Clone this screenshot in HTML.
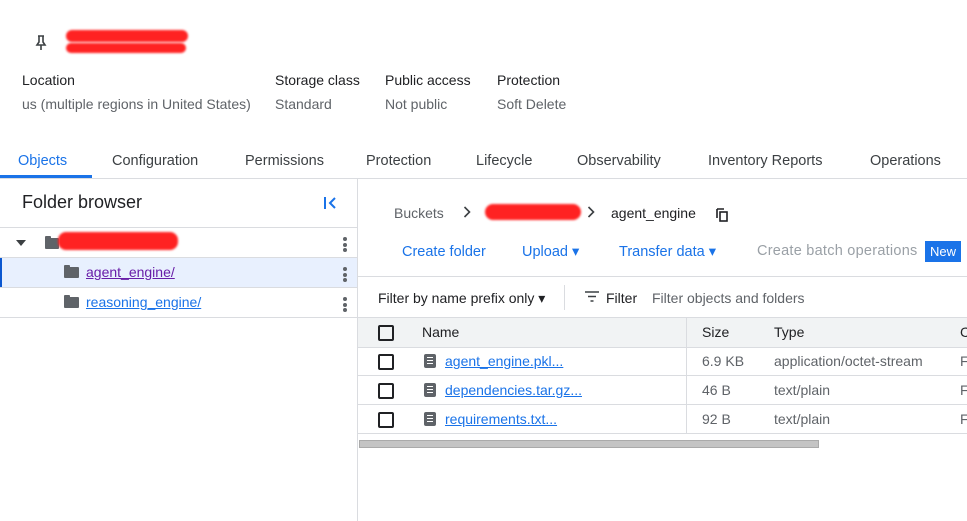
<!DOCTYPE html>
<html><head><meta charset="utf-8"><style>
body{margin:0;width:967px;height:521px;overflow:hidden;background:#fff;font-family:"Liberation Sans",Arial,sans-serif;color:#202124;position:relative}
.a{position:absolute;white-space:nowrap}
.lbl{font-size:14px;color:#202124}
.val{font-size:14px;color:#5f6368}
.tab{font-size:14.5px;color:#3c4043;top:152px}
.blue{color:#1a73e8}
.link{color:#1a73e8;text-decoration:underline;font-size:14px}
.cb{position:absolute;width:12px;height:12px;border:2px solid #202124;border-radius:2px}
.red{position:absolute;background:#f22;border-radius:8px;filter:blur(1px)}
.dots{position:absolute;width:4px}
.dots i{display:block;width:4px;height:4px;border-radius:2px;background:#5f6368;margin-bottom:1.5px}
.hl{position:absolute;height:1px;background:#dadce0}
.doc{position:absolute;width:12px;height:14px;background:#5f6368;border-radius:2px}
.doc:after{content:"";position:absolute;left:3px;top:3px;width:6px;height:7px;background:repeating-linear-gradient(#fff 0 1px,transparent 1px 3px)}
.fold{position:absolute;width:15px;height:11px;background:#5f6368;border-radius:1px}
.fold:before{content:"";position:absolute;left:0;top:-2px;width:6px;height:3px;background:#5f6368;border-radius:1px 1px 0 0}
</style></head><body>
<svg class="a" style="left:35px;top:35px" width="12" height="16" viewBox="0 0 12 16"><path d="M3 1h6M4 1v6L2 10h8L8 7V1M6 10v5" fill="none" stroke="#3c4043" stroke-width="1.6"/></svg>
<div class="red" style="left:66px;top:30px;width:122px;height:12px"></div>
<div class="red" style="left:66px;top:43px;width:120px;height:10px"></div>

<div class="a lbl" style="left:22px;top:72px">Location</div>
<div class="a val" style="left:22px;top:96px">us (multiple regions in United States)</div>
<div class="a lbl" style="left:275px;top:72px">Storage class</div>
<div class="a val" style="left:275px;top:96px">Standard</div>
<div class="a lbl" style="left:385px;top:72px">Public access</div>
<div class="a val" style="left:385px;top:96px">Not public</div>
<div class="a lbl" style="left:497px;top:72px">Protection</div>
<div class="a val" style="left:497px;top:96px">Soft Delete</div>

<div class="a tab blue" style="left:18px;top:153px">Objects</div>
<div class="a tab" style="left:112px;top:153px">Configuration</div>
<div class="a tab" style="left:245px;top:153px">Permissions</div>
<div class="a tab" style="left:366px;top:153px">Protection</div>
<div class="a tab" style="left:476px;top:153px">Lifecycle</div>
<div class="a tab" style="left:577px;top:153px">Observability</div>
<div class="a tab" style="left:708px;top:153px">Inventory Reports</div>
<div class="a tab" style="left:870px;top:153px">Operations</div>
<div class="hl" style="left:0;top:178px;width:967px"></div>
<div class="a" style="left:0;top:175px;width:92px;height:3px;background:#1a73e8"></div>

<div class="a" style="left:357px;top:179px;width:1px;height:342px;background:#dadce0"></div>
<div class="a" style="left:22px;top:192px;font-size:18px">Folder browser</div>
<svg class="a" style="left:323px;top:196px" width="14" height="14" viewBox="0 0 14 14"><path d="M2 1v12M12 2L7 7l5 5" fill="none" stroke="#1a73e8" stroke-width="2"/></svg>
<div class="hl" style="left:0;top:227px;width:357px"></div>
<div class="a" style="left:16px;top:240px;border-left:5px solid transparent;border-right:5px solid transparent;border-top:6px solid #3c4043"></div>
<div class="fold" style="left:45px;top:238px;width:14px;height:11px"></div>
<div class="red" style="left:58px;top:232px;width:120px;height:18px"></div>
<div class="dots" style="left:343px;top:237px"><i></i><i></i><i></i></div>
<div class="hl" style="left:0;top:257px;width:357px"></div>
<div class="a" style="left:0;top:258px;width:357px;height:29px;background:#e8f0fe"></div>
<div class="a" style="left:0;top:258px;width:2px;height:29px;background:#0b57d0"></div>
<div class="fold" style="left:64px;top:267px"></div>
<div class="a" style="left:86px;top:264px;font-size:14px;color:#681da8;text-decoration:underline">agent_engine/</div>
<div class="dots" style="left:343px;top:267px"><i></i><i></i><i></i></div>
<div class="hl" style="left:0;top:287px;width:357px"></div>
<div class="fold" style="left:64px;top:297px"></div>
<div class="a link" style="left:86px;top:294px">reasoning_engine/</div>
<div class="dots" style="left:343px;top:297px"><i></i><i></i><i></i></div>
<div class="hl" style="left:0;top:317px;width:357px"></div>

<div class="a val" style="left:394px;top:205px">Buckets</div>
<svg class="a" style="left:463px;top:206px" width="8" height="12" viewBox="0 0 8 12"><path d="M1.5 1l5 5-5 5" fill="none" stroke="#3c4043" stroke-width="1.6"/></svg>
<div class="red" style="left:485px;top:204px;width:96px;height:16px"></div>
<svg class="a" style="left:587px;top:206px" width="8" height="12" viewBox="0 0 8 12"><path d="M1.5 1l5 5-5 5" fill="none" stroke="#3c4043" stroke-width="1.6"/></svg>
<div class="a lbl" style="left:611px;top:205px">agent_engine</div>
<svg class="a" style="left:716px;top:208px" width="13" height="14" viewBox="0 0 13 14"><path d="M1 1h7M1 1v9" fill="none" stroke="#202124" stroke-width="1.6"/><rect x="4" y="4" width="7" height="9" fill="none" stroke="#202124" stroke-width="1.6"/></svg>

<div class="a blue" style="left:402px;top:244px;font-size:14.5px">Create folder</div>
<div class="a blue" style="left:522px;top:244px;font-size:14.5px">Upload ▾</div>
<div class="a blue" style="left:619px;top:244px;font-size:14.5px">Transfer data ▾</div>
<div class="a" style="left:757px;top:243px;font-size:14.5px;color:#9aa0a6;letter-spacing:0.25px">Create batch operations</div>
<div class="a" style="left:925px;top:241px;width:36px;height:21px;background:#1a73e8;color:#fff;font-size:13px;text-align:center;line-height:21px">New</div>
<div class="hl" style="left:358px;top:276px;width:609px"></div>

<div class="a lbl" style="left:378px;top:290px">Filter by name prefix only ▾</div>
<div class="a" style="left:564px;top:285px;width:1px;height:25px;background:#dadce0"></div>
<svg class="a" style="left:585px;top:291px" width="14" height="11" viewBox="0 0 14 11"><path d="M0 1h14M3 5.5h8M5.5 10h3" stroke="#3c4043" stroke-width="1.6"/></svg>
<div class="a lbl" style="left:606px;top:290px">Filter</div>
<div class="a val" style="left:652px;top:290px">Filter objects and folders</div>

<div class="a" style="left:358px;top:317px;width:609px;height:29px;background:#f1f3f4;border-top:1px solid #dadce0;border-bottom:1px solid #dadce0"></div>
<div class="a" style="left:686px;top:317px;width:1px;height:116px;background:#dadce0"></div>
<div class="cb" style="left:378px;top:325px"></div>
<div class="a lbl" style="left:422px;top:324px">Name</div>
<div class="a lbl" style="left:702px;top:324px">Size</div>
<div class="a lbl" style="left:774px;top:324px">Type</div>
<div class="a lbl" style="left:960px;top:324px">C</div>

<div class="cb" style="left:378px;top:354px"></div>
<div class="doc" style="left:424px;top:354px"></div>
<div class="a link" style="left:445px;top:353px">agent_engine.pkl...</div>
<div class="a val" style="left:702px;top:353px">6.9 KB</div>
<div class="a val" style="left:774px;top:353px">application/octet-stream</div>
<div class="a val" style="left:960px;top:353px">F</div>
<div class="hl" style="left:358px;top:375px;width:609px"></div>

<div class="cb" style="left:378px;top:383px"></div>
<div class="doc" style="left:424px;top:383px"></div>
<div class="a link" style="left:445px;top:382px">dependencies.tar.gz...</div>
<div class="a val" style="left:702px;top:382px">46 B</div>
<div class="a val" style="left:774px;top:382px">text/plain</div>
<div class="a val" style="left:960px;top:382px">F</div>
<div class="hl" style="left:358px;top:404px;width:609px"></div>

<div class="cb" style="left:378px;top:412px"></div>
<div class="doc" style="left:424px;top:412px"></div>
<div class="a link" style="left:445px;top:411px">requirements.txt...</div>
<div class="a val" style="left:702px;top:411px">92 B</div>
<div class="a val" style="left:774px;top:411px">text/plain</div>
<div class="a val" style="left:960px;top:411px">F</div>
<div class="hl" style="left:358px;top:433px;width:609px"></div>

<div class="a" style="left:359px;top:440px;width:460px;height:8px;background:#c4c4c4;border:1px solid #aaa;box-sizing:border-box"></div>
</body></html>
